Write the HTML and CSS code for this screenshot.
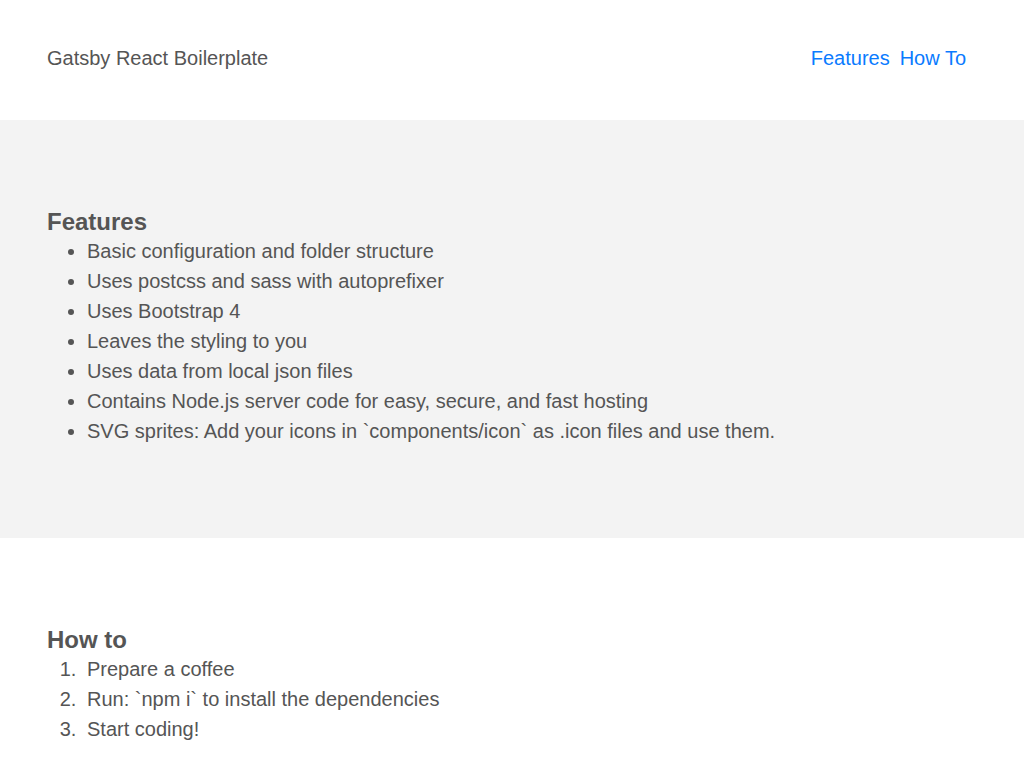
FILE: index.html
```html
<!DOCTYPE html>
<html lang="en">
<head>
<meta charset="utf-8">
<title>Gatsby React Boilerplate</title>
<link rel="stylesheet" href="styles.css">
</head>
<body>
<header class="header">
  <div class="brand">Gatsby React Boilerplate</div>
  <nav class="nav">
    <a href="#features">Features</a>
    <a href="#howto">How To</a>
  </nav>
</header>
<section class="section section-gray" id="features">
  <h2 class="title">Features</h2>
  <ul class="list">
    <li>Basic configuration and folder structure</li>
    <li>Uses postcss and sass with autoprefixer</li>
    <li>Uses Bootstrap 4</li>
    <li>Leaves the styling to you</li>
    <li>Uses data from local json files</li>
    <li>Contains Node.js server code for easy, secure, and fast hosting</li>
    <li>SVG sprites: Add your icons in `components/icon` as .icon files and use them.</li>
  </ul>
</section>
<section class="section" id="howto">
  <h2 class="title">How to</h2>
  <ol class="list list-num">
    <li>Prepare a coffee</li>
    <li>Run: `npm i` to install the dependencies</li>
    <li>Start coding!</li>
  </ol>
</section>
</body>
</html>
```
FILE: styles.css
```css
html, body {
  margin: 0;
  padding: 0;
}
body {
  font-family: "Liberation Sans", Arial, sans-serif;
  font-size: 20px;
  line-height: 30px;
  color: #555555;
  background: #ffffff;
}
.header {
  height: 120px;
  display: flex;
  align-items: center;
  justify-content: space-between;
  padding: 0 58px 4px 47px;
  box-sizing: border-box;
}
.brand {
  font-size: 20px;
}
.nav {
  display: flex;
  gap: 10px;
}
.nav a {
  color: #0a7bff;
  text-decoration: none;
}
.section {
  padding: 86px 47px 92px;
}
.section-gray {
  background: #f3f3f3;
}
.title {
  margin: 0;
  font-size: 24px;
  line-height: 30px;
  font-weight: bold;
  position: relative;
  top: 1px;
}
.list {
  margin: 0;
  padding-left: 40px;
}
.list-num li {
  padding-left: 5px;
  margin-left: -5px;
}
```
